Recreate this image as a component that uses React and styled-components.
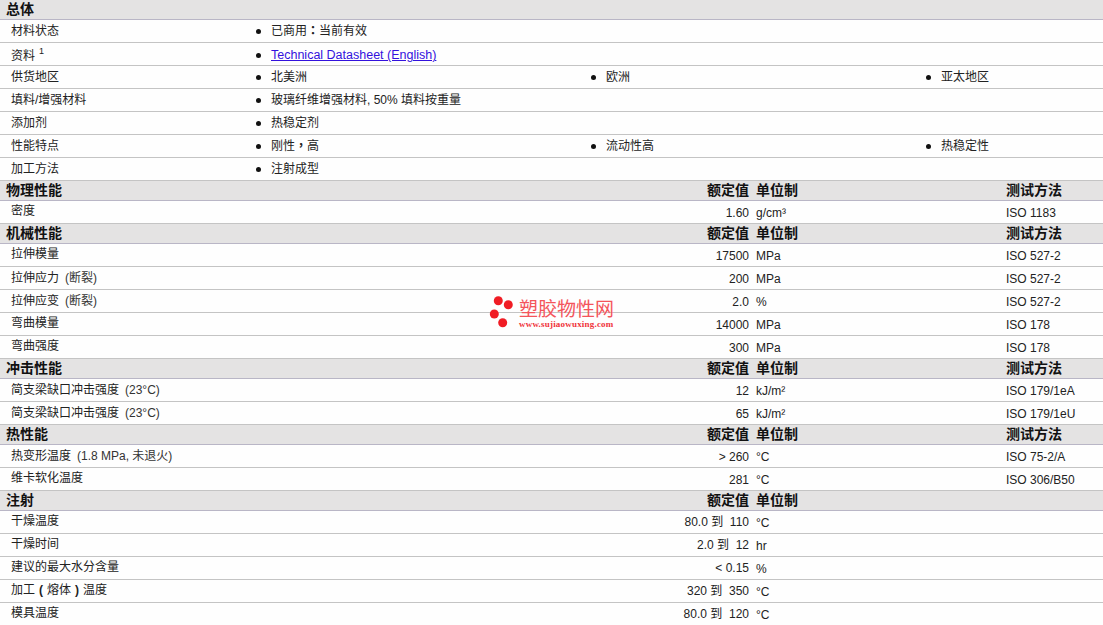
import React from "react";
import styled, { createGlobalStyle } from "styled-components";

const GlobalStyle = createGlobalStyle`
  html, body {
    margin: 0;
    padding: 0;
    background: #fefefe;
    overflow: hidden;
  }
`;

const Punct = styled.span`
  font-family: "Noto Sans CJK TC", sans-serif;
  font-weight: 700;
  line-height: 0;
`;

const Bracket = styled.span`
  display: inline-block;
  width: 12px;
  text-align: center;
  font-weight: 700;
`;

const general = [
  { label: "材料状态", items: [<>已商用<Punct>：</Punct>当前有效</>] },
  { label: "资料", note: "1", link: "Technical Datasheet (English)" },
  { label: "供货地区", items: ["北美洲", "欧洲", "亚太地区"] },
  { label: "填料/增强材料", items: ["玻璃纤维增强材料, 50% 填料按重量"] },
  { label: "添加剂", items: ["热稳定剂"] },
  { label: "性能特点", items: [<>刚性<Punct>，</Punct>高</>, "流动性高", "热稳定性"] },
  { label: "加工方法", items: ["注射成型"] },
];

const sections = [
  {
    title: "物理性能",
    method: true,
    rows: [{ name: "密度", value: "1.60", unit: "g/cm³", test: "ISO 1183" }],
  },
  {
    title: "机械性能",
    method: true,
    rows: [
      { name: "拉伸模量", value: "17500", unit: "MPa", test: "ISO 527-2" },
      { name: "拉伸应力", cond: "(断裂)", value: "200", unit: "MPa", test: "ISO 527-2" },
      { name: "拉伸应变", cond: "(断裂)", value: "2.0", unit: "%", test: "ISO 527-2" },
      { name: "弯曲模量", value: "14000", unit: "MPa", test: "ISO 178" },
      { name: "弯曲强度", value: "300", unit: "MPa", test: "ISO 178" },
    ],
  },
  {
    title: "冲击性能",
    method: true,
    rows: [
      { name: "简支梁缺口冲击强度", cond: "(23°C)", value: "12", unit: "kJ/m²", test: "ISO 179/1eA" },
      { name: "简支梁缺口冲击强度", cond: "(23°C)", value: "65", unit: "kJ/m²", test: "ISO 179/1eU" },
    ],
  },
  {
    title: "热性能",
    method: true,
    rows: [
      { name: "热变形温度", cond: "(1.8 MPa, 未退火)", value: "> 260", unit: "°C", test: "ISO 75-2/A" },
      { name: "维卡软化温度", value: "281", unit: "°C", test: "ISO 306/B50" },
    ],
  },
  {
    title: "注射",
    rows: [
      { name: "干燥温度", value: "80.0 到  110", unit: "°C", range: true },
      { name: "干燥时间", value: "2.0 到  12", unit: "hr", range: true },
      { name: "建议的最大水分含量", value: "< 0.15", unit: "%", range: true },
      {
        name: (
          <>
            加工<Bracket>(</Bracket>熔体<Bracket>)</Bracket>温度
          </>
        ),
        value: "320 到  350",
        unit: "°C",
        range: true,
      },
      { name: "模具温度", value: "80.0 到  120", unit: "°C", range: true },
    ],
  },
];

export default function App() {
  return (
    <Page>
      <GlobalStyle />
      <HeaderRow>
        <HeaderTitle>总体</HeaderTitle>
      </HeaderRow>
      {general.map((row) => (
        <InfoRow key={row.label} $low={!!row.link}>
          <Label $low={!!row.link}>
            {row.label}
            {row.note && <Note>{row.note}</Note>}
          </Label>
          <InfoColumns>
            {row.link && (
              <InfoItem>
                <DocLink href="#">{row.link}</DocLink>
              </InfoItem>
            )}
            {row.items &&
              row.items.map((item, i) => <InfoItem key={i}>{item}</InfoItem>)}
          </InfoColumns>
        </InfoRow>
      ))}
      {sections.map((section) => (
        <section key={section.title}>
          <HeaderRow>
            <HeaderTitle>{section.title}</HeaderTitle>
            <HeaderValue>额定值</HeaderValue>
            <HeaderUnit>单位制</HeaderUnit>
            {section.method && <HeaderUnit>测试方法</HeaderUnit>}
          </HeaderRow>
          {section.rows.map((row, i) => (
            <DataRow key={i}>
              <DataLabel $lifted={!row.cond}>
                {row.name}
                {row.cond && <Condition>{row.cond}</Condition>}
              </DataLabel>
              <Value $range={row.range}>{row.value}</Value>
              <Unit>{row.unit}</Unit>
              <Unit>{row.test}</Unit>
            </DataRow>
          ))}
        </section>
      ))}
      <Watermark>
        <svg width="26" height="34" viewBox="0 0 26 34">
          <circle cx="9.3" cy="5.7" r="4.5" fill="#f01c24" />
          <circle cx="19.3" cy="9.7" r="4.5" fill="#f01c24" />
          <circle cx="5.3" cy="19" r="4.5" fill="#f01c24" />
          <circle cx="13.7" cy="27.7" r="4.5" fill="#f01c24" />
        </svg>
        <WatermarkText>
          <WatermarkName>塑胶物性网</WatermarkName>
          <WatermarkUrl>www.sujiaowuxing.com</WatermarkUrl>
        </WatermarkText>
      </Watermark>
    </Page>
  );
}

const Page = styled.div`
  position: relative;
  width: 1103px;
  height: 625px;
  overflow: hidden;
  font-family: "Liberation Sans", "Noto Sans CJK SC", sans-serif;
  font-size: 12px;
  color: #222;
  background: #fefefe;
`;

const HeaderRow = styled.div`
  display: grid;
  grid-template-columns: 6px 694px 49px 7px 250px 1fr;
  box-sizing: border-box;
  height: 20px;
  line-height: 18px;
  background: #e4e3e3;
  border-bottom: 1px solid #b9b6c6;
  font-size: 14px;
  font-weight: 700;
  color: #111;
  white-space: nowrap;
`;

const HeaderTitle = styled.span`
  grid-column: 2;
`;

const HeaderValue = styled.span`
  grid-column: 3;
  justify-self: end;
`;

const HeaderUnit = styled.span`
  &:nth-child(3) {
    grid-column: 5;
  }
  &:nth-child(4) {
    grid-column: 6;
  }
`;

const InfoRow = styled.div`
  display: flex;
  box-sizing: border-box;
  height: 23px;
  line-height: 22px;
  padding-left: 11px;
  border-bottom: 1px solid #c4c4c4;
  white-space: nowrap;
  padding-top: ${(p) => (p.$low ? "1px" : "0")};
`;

const Label = styled.div`
  width: 244px;
  flex: none;
  padding-top: ${(p) => (p.$low ? "1px" : "0")};
  margin-bottom: ${(p) => (p.$low ? "-2px" : "0")};
`;

const Note = styled.sup`
  font-size: 9px;
  line-height: 0;
  margin-left: 4px;
  vertical-align: 6px;
`;

const Condition = styled.span`
  margin-left: 6px;
  color: #333;
`;

const InfoColumns = styled.div`
  display: grid;
  grid-template-columns: repeat(3, 335px);
`;

const InfoItem = styled.div`
  position: relative;
  padding-left: 16px;
  &::before {
    content: "";
    position: absolute;
    left: 1px;
    top: 9px;
    width: 5px;
    height: 5px;
    border-radius: 50%;
    background: #111;
  }
`;

const DocLink = styled.a`
  font-size: 12.5px;
  color: #3311dd;
  text-decoration: underline;
`;

const DataRow = styled.div`
  display: grid;
  grid-template-columns: 11px 689px 49px 7px 250px 1fr;
  box-sizing: border-box;
  height: 23px;
  line-height: 22px;
  border-bottom: 1px solid #c4c4c4;
  white-space: nowrap;
`;

const DataLabel = styled.div`
  grid-column: 2;
  margin-top: ${(p) => (p.$lifted ? "-1px" : "0")};
`;

const Value = styled.div`
  grid-column: 3;
  justify-self: end;
  white-space: pre;
  padding-top: ${(p) => (p.$range ? "0" : "1px")};
`;

const Unit = styled.div`
  padding-top: 1px;
  &:nth-child(3) {
    grid-column: 5;
  }
  &:nth-child(4) {
    grid-column: 6;
  }
`;

const Watermark = styled.div`
  position: absolute;
  left: 489px;
  top: 295px;
  display: flex;
  gap: 4px;
  pointer-events: none;
`;

const WatermarkText = styled.div`
  display: flex;
  flex-direction: column;
  padding-top: 6px;
`;

const WatermarkName = styled.div`
  font-size: 19px;
  line-height: 18px;
  color: #f4555b;
`;

const WatermarkUrl = styled.div`
  font-family: "Liberation Serif", serif;
  font-size: 9px;
  font-weight: 700;
  line-height: 10px;
  letter-spacing: 0.2px;
  color: #f0333a;
`;
